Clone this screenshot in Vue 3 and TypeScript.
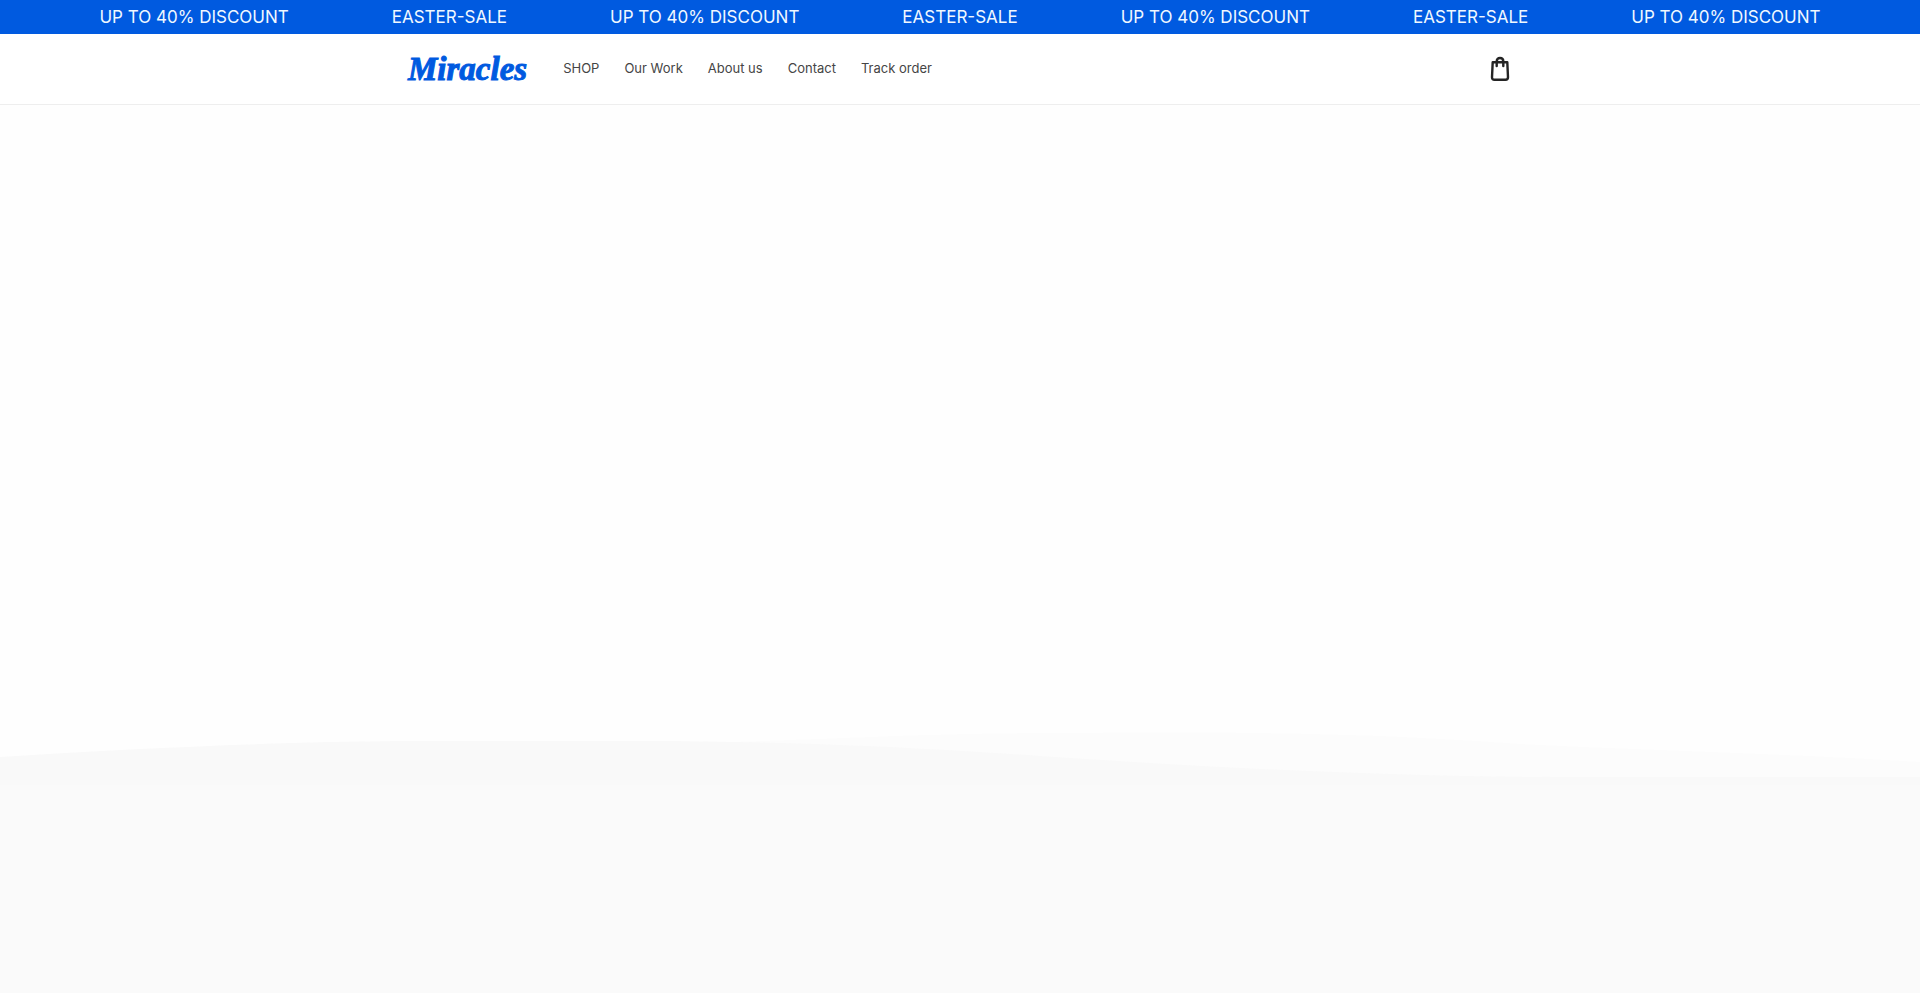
<script setup lang="ts">
const announcements: string[] = [
  'UP TO 40% DISCOUNT',
  'EASTER-SALE',
  'UP TO 40% DISCOUNT',
  'EASTER-SALE',
  'UP TO 40% DISCOUNT',
  'EASTER-SALE',
  'UP TO 40% DISCOUNT',
]

const links: string[] = ['SHOP', 'Our Work', 'About us', 'Contact', 'Track order']
</script>

<template>
  <div class="page">
    <div class="ticker">
      <span v-for="(text, i) in announcements" :key="i">{{ text }}</span>
    </div>

    <header class="header">
      <div class="bar">
        <a class="logo" href="#">Miracles</a>
        <nav class="nav">
          <a v-for="link in links" :key="link" href="#">{{ link }}</a>
        </nav>
        <button class="cart" type="button" aria-label="Cart">
          <svg viewBox="0 0 20 26" width="20" height="26" aria-hidden="true">
            <path d="M2.7 6.2H17.3L18 21.3Q18 23.8 15.5 23.8H4.5Q2 23.8 2 21.3Z" />
            <path d="M6.7 10V5.4C6.7 3.4 8 2 10 2S13.3 3.4 13.3 5.4V10" />
          </svg>
        </button>
      </div>
    </header>

    <main class="hero"></main>

    <svg class="waves" viewBox="0 0 1920 56" preserveAspectRatio="none" aria-hidden="true">
      <path
        class="back"
        d="M700 14C850 10 920 4 1080 4C1320 2 1420 8 1520 15C1660 22 1800 25 1920 33V56H700Z"
      />
      <path
        class="front"
        d="M0 28C140 19 280 13 400 12H640C800 12 940 20 1040 27C1200 38 1400 48 1560 48H1920V56H0Z"
      />
    </svg>

    <section class="lower"></section>
  </div>
</template>

<style>
body {
  margin: 0;
}
</style>

<style scoped>
.page {
  display: flex;
  flex-direction: column;
  min-height: 100vh;
  overflow: hidden;
  background: #fefefe;
  font-family: Inter, 'Liberation Sans', sans-serif;
}

.ticker {
  display: flex;
  justify-content: center;
  gap: 103px;
  padding-top: 1px;
  background: #005ae0;
  color: #f0f8ff;
  font-size: 17px;
  line-height: 33px;
  white-space: nowrap;
}

.header {
  border-bottom: 1px solid #eeeeee;
  background: #ffffff;
}

.bar {
  display: flex;
  align-items: center;
  box-sizing: border-box;
  max-width: 1120px;
  height: 70px;
  margin: 0 auto;
  padding: 0 10px 0 8px;
}

.logo {
  margin-right: 36px;
  color: #005ae0;
  font-family: 'Liberation Serif', serif;
  font-size: 33px;
  font-style: italic;
  font-weight: 700;
  line-height: 40px;
  text-decoration: none;
  -webkit-text-stroke: 1px #005ae0;
}

.nav {
  display: flex;
  gap: 25px;
  padding-bottom: 2px;
}

.nav a {
  color: #454545;
  font-size: 13px;
  line-height: 20px;
  text-decoration: none;
  white-space: nowrap;
}

.cart {
  display: flex;
  margin-left: auto;
  padding: 0;
  border: 0;
  background: none;
  cursor: pointer;
}

.cart path {
  fill: none;
  stroke: #242424;
  stroke-width: 2.4;
  stroke-linejoin: round;
  stroke-linecap: round;
}

.hero {
  flex: 1;
}

.waves {
  display: block;
  width: 100%;
  height: 56px;
}

.back {
  fill: #fcfcfc;
}

.front {
  fill: #f9f9f9;
}

.lower {
  min-height: 208px;
  background: #fafafa;
}
</style>
